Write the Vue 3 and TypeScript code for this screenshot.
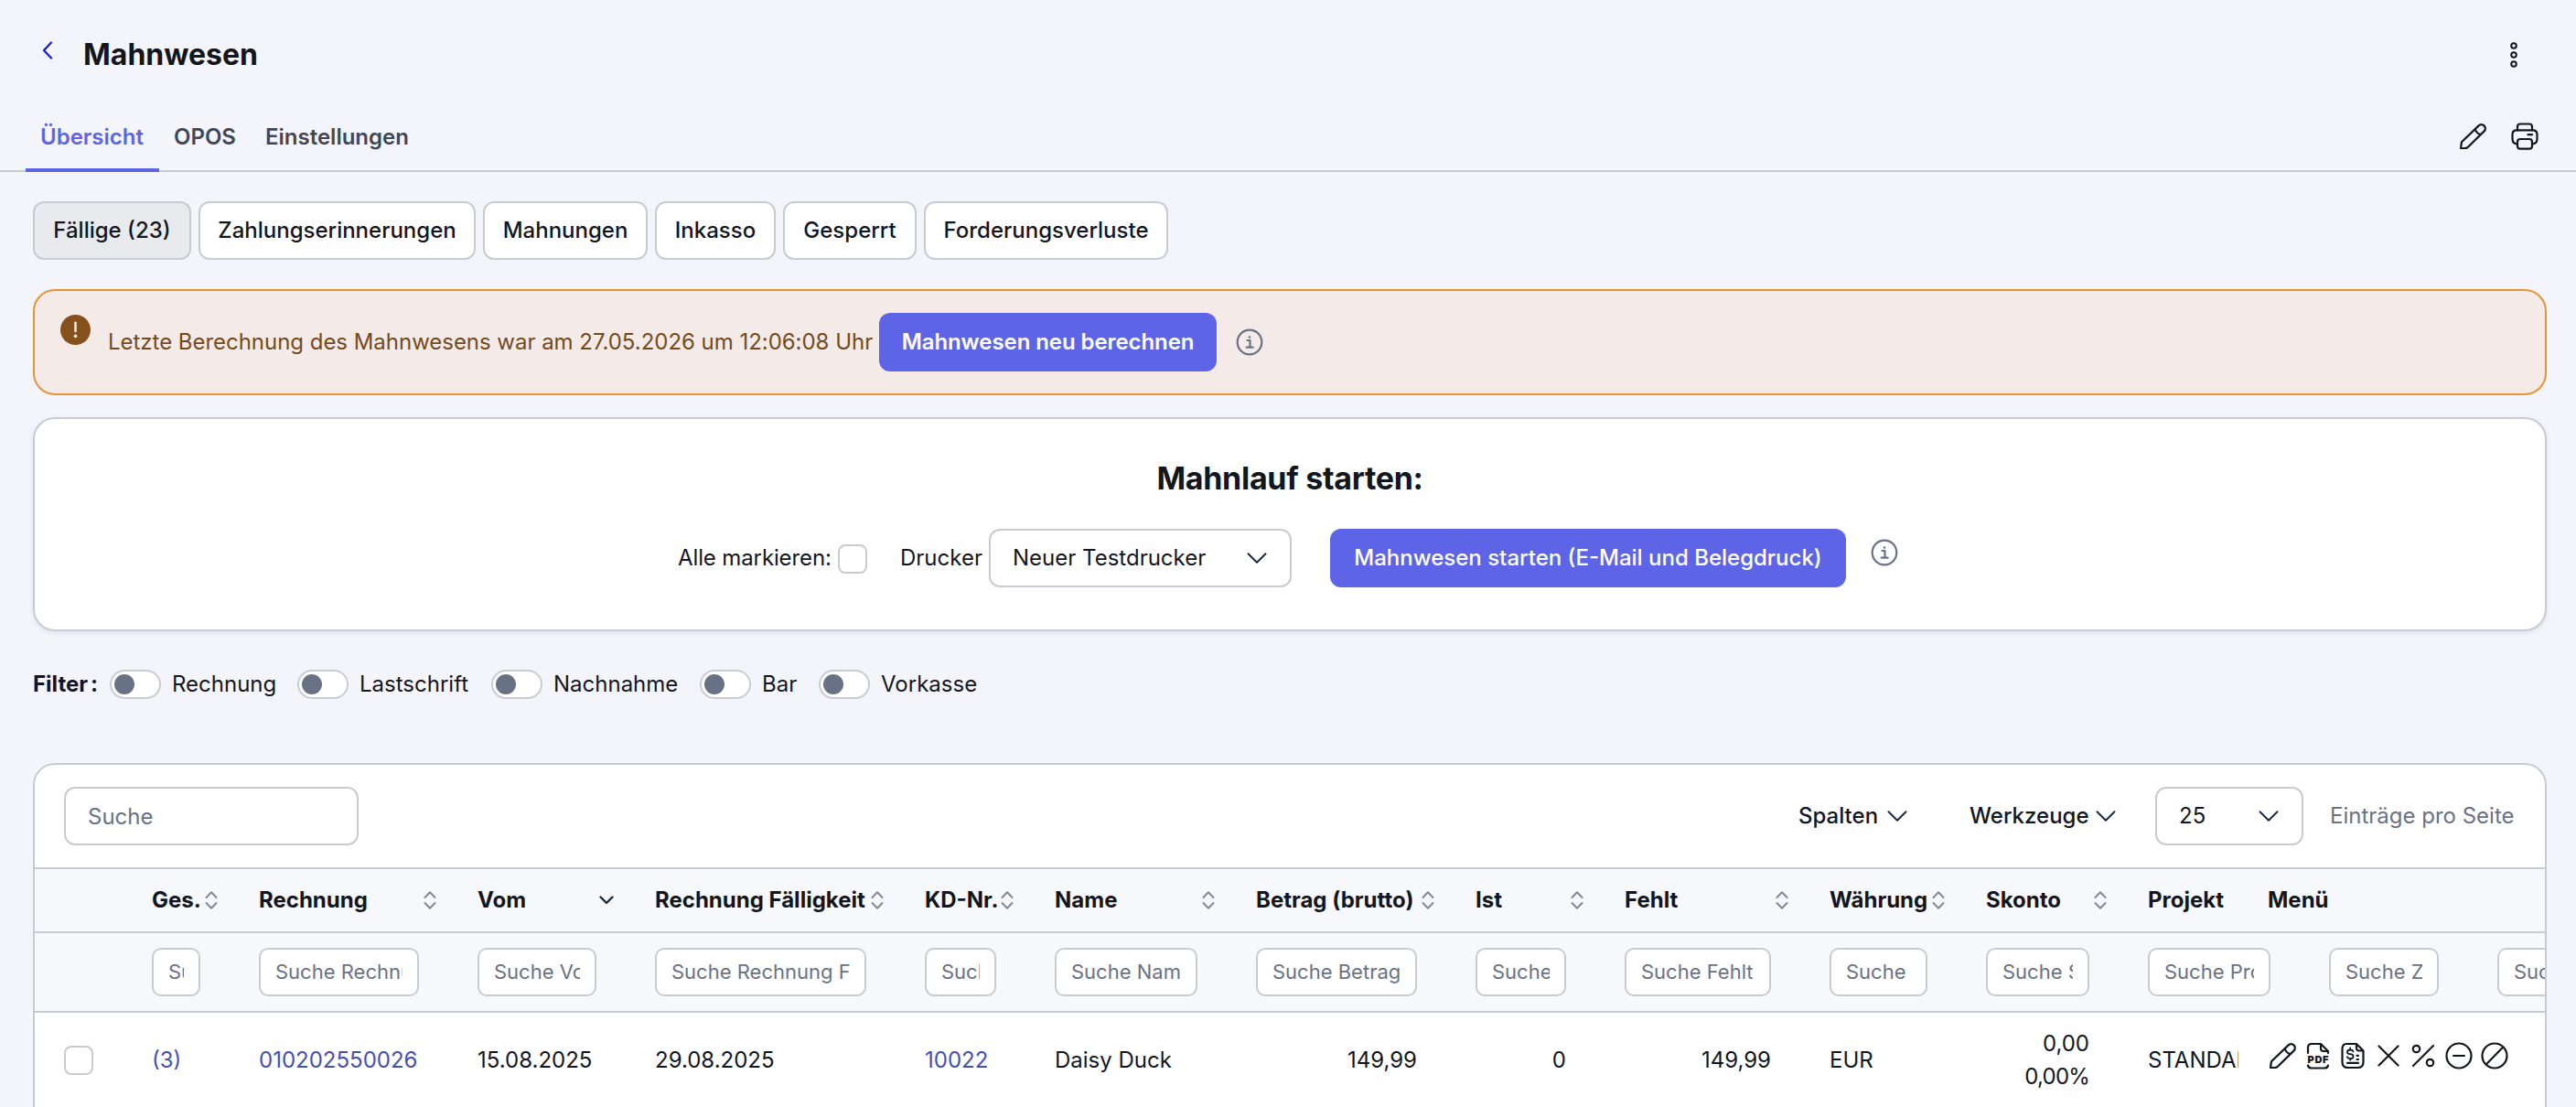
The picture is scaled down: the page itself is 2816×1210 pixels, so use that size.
<script setup lang="ts">
interface Column {
  label: string
  width: number
  placeholder: string
  sort: 'both' | 'desc' | 'none'
}

const tabs: string[] = ['Übersicht', 'OPOS', 'Einstellungen']

const pills: { label: string; width: number }[] = [
  { label: 'Fällige (23)', width: 173 },
  { label: 'Zahlungserinnerungen', width: 303 },
  { label: 'Mahnungen', width: 180 },
  { label: 'Inkasso', width: 132 },
  { label: 'Gesperrt', width: 146 },
  { label: 'Forderungsverluste', width: 267 },
]

const filters: { label: string; width: number }[] = [
  { label: 'Rechnung', width: 205 },
  { label: 'Lastschrift', width: 212 },
  { label: 'Nachnahme', width: 228 },
  { label: 'Bar', width: 130 },
  { label: 'Vorkasse', width: 180 },
]

const columns: Column[] = [
  { label: 'Ges.', width: 117, placeholder: 'Suche Ges.', sort: 'both' },
  { label: 'Rechnung', width: 239, placeholder: 'Suche Rechnung', sort: 'both' },
  { label: 'Vom', width: 194, placeholder: 'Suche Vom', sort: 'desc' },
  { label: 'Rechnung Fälligkeit', width: 295, placeholder: 'Suche Rechnung Fälligkeit', sort: 'both' },
  { label: 'KD-Nr.', width: 142, placeholder: 'Suche KD-Nr.', sort: 'both' },
  { label: 'Name', width: 220, placeholder: 'Suche Name', sort: 'both' },
  { label: 'Betrag (brutto)', width: 240, placeholder: 'Suche Betrag (brutto)', sort: 'both' },
  { label: 'Ist', width: 163, placeholder: 'Suche Ist', sort: 'both' },
  { label: 'Fehlt', width: 224, placeholder: 'Suche Fehlt', sort: 'both' },
  { label: 'Währung', width: 171, placeholder: 'Suche Währung', sort: 'both' },
  { label: 'Skonto', width: 177, placeholder: 'Suche Skonto', sort: 'both' },
]

const trailingFilters: { placeholder: string; width: number }[] = [
  { placeholder: 'Suche Projekt', width: 198 },
  { placeholder: 'Suche Zahlweise', width: 184 },
  { placeholder: 'Suche', width: 184 },
]
</script>

<template>
  <div class="page">
    <header class="title-row">
      <svg class="back" viewBox="0 0 12 20" width="12" height="20"><path d="M10 1.5 2 10l8 8.5" /></svg>
      <h1>Mahnwesen</h1>
      <svg class="kebab" viewBox="0 0 8 28" width="8" height="28">
        <circle cx="4" cy="4" r="2.8" /><circle cx="4" cy="14" r="2.8" /><circle cx="4" cy="24" r="2.8" />
      </svg>
    </header>

    <nav class="tabs">
      <a v-for="(tab, i) in tabs" :key="tab" class="tab" :class="{ active: i === 0 }">{{ tab }}</a>
      <div class="tab-tools">
        <svg class="icon" viewBox="0 0 28 28" width="28" height="28">
          <path d="M1 27 2 20.2 20.6 2.4a4.2 4.2 0 0 1 6 6L8.4 26.2Q7 27 5 27Z" /><path d="M16.8 6.2Q18 10.5 22.4 12" />
        </svg>
        <svg class="icon printer" viewBox="0 0 30 30" width="30" height="30">
          <path d="M7 8.4V4.5Q7 1.5 10 1.5h10q3 0 3 3v3.9" />
          <path d="M7 23.4Q1.5 23 1.5 18v-5Q1.5 8.4 6 8.4h18q4.5 0 4.5 4.6v5q0 5-5.5 5.4" />
          <rect x="7" y="18" width="16" height="10.7" rx="3" /><path d="M18.5 13.2h4.5" />
        </svg>
      </div>
    </nav>

    <main>
      <div class="pills">
        <button v-for="(p, i) in pills" :key="p.label" class="pill" :class="{ on: i === 0 }" :style="{ width: p.width + 'px' }">{{ p.label }}</button>
      </div>

      <section class="alert">
        <svg class="warn" viewBox="0 0 32 32" width="33" height="33">
          <circle cx="16" cy="16" r="16" fill="#85501c" />
          <path d="M16 8.5v9" stroke="#f4eae8" stroke-width="2.5" stroke-linecap="round" />
          <circle cx="16" cy="22.6" r="1.8" fill="#f4eae8" />
        </svg>
        <span class="alert-text">Letzte Berechnung des Mahnwesens war am 27.05.2026 um 12:06:08 Uhr</span>
        <button class="primary recalc">Mahnwesen neu berechnen</button>
        <svg class="info" viewBox="0 0 30 30" width="30" height="30">
          <circle cx="15" cy="15" r="13.3" /><path d="M12.5 13h3v7.5M11.7 20.7h7" /><circle class="dot" cx="15" cy="9.5" r="1.3" />
        </svg>
      </section>

      <section class="run">
        <h2>Mahnlauf starten:</h2>
        <div class="run-row">
          <span class="mark-label">Alle markieren:</span>
          <span class="check"></span>
          <span class="printer-label">Drucker</span>
          <div class="select printer-select">
            <span>Neuer Testdrucker</span>
            <svg class="chev" viewBox="0 0 22 12" width="22" height="12"><path d="m1.500 1.200 9.500 9.500 9.500-9.500" /></svg>
          </div>
          <button class="primary start">Mahnwesen starten (E-Mail und Belegdruck)</button>
          <svg class="info high" viewBox="0 0 30 30" width="30" height="30">
            <circle cx="15" cy="15" r="13.3" /><path d="M12.5 13h3v7.5M11.7 20.7h7" /><circle class="dot" cx="15" cy="9.5" r="1.3" />
          </svg>
        </div>
      </section>

      <div class="filters">
        <strong>Filter<span class="colon">:</span></strong>
        <label v-for="f in filters" :key="f.label" :style="{ width: f.width + 'px' }"><i class="toggle"></i>{{ f.label }}</label>
      </div>

      <section class="table-card">
        <div class="toolbar">
          <input class="search" placeholder="Suche" />
          <div class="tool columns">Spalten <svg class="chev" viewBox="0 0 22 12" width="22" height="12"><path d="m1.500 1.200 9.500 9.500 9.500-9.500" /></svg></div>
          <div class="tool utilities">Werkzeuge <svg class="chev" viewBox="0 0 22 12" width="22" height="12"><path d="m1.500 1.200 9.500 9.500 9.500-9.500" /></svg></div>
          <div class="select size-select">
            <span>25</span>
            <svg class="chev" viewBox="0 0 22 12" width="22" height="12"><path d="m1.500 1.200 9.500 9.500 9.500-9.500" /></svg>
          </div>
          <span class="per-page">Einträge pro Seite</span>
        </div>

        <div class="row head">
          <div class="lead"></div>
          <div v-for="c in columns" :key="c.label" class="cell th" :style="{ width: c.width + 'px' }">
            <span>{{ c.label }}</span>
            <svg v-if="c.sort === 'both'" class="sort" viewBox="0 0 14 20" width="14" height="20"><path d="m1.500 7 5.500-5.800L12.500 7M1.500 13l5.500 5.800 5.500-5.800" /></svg>
            <svg v-else class="sort desc" viewBox="0 0 16 10" width="16" height="10"><path d="m1.500 1.500 6.500 6.500 6.500-6.500" /></svg>
          </div>
          <div class="cell project">Projekt</div>
          <div class="menu-title">Menü</div>
        </div>

        <div class="row search-row">
          <div class="lead"></div>
          <div v-for="c in columns" :key="c.label" class="cell" :style="{ width: c.width + 'px' }"><input :placeholder="c.placeholder" /></div>
          <div v-for="t in trailingFilters" :key="t.placeholder" class="cell" :style="{ width: t.width + 'px' }"><input :placeholder="t.placeholder" /></div>
        </div>

        <div class="row data">
          <div class="lead"><span class="check"></span></div>
          <div class="cell link" :style="{ width: columns[0].width + 'px' }">(3)</div>
          <div class="cell link" :style="{ width: columns[1].width + 'px' }">010202550026</div>
          <div class="cell" :style="{ width: columns[2].width + 'px' }">15.08.2025</div>
          <div class="cell" :style="{ width: columns[3].width + 'px' }">29.08.2025</div>
          <div class="cell link" :style="{ width: columns[4].width + 'px' }">10022</div>
          <div class="cell" :style="{ width: columns[5].width + 'px' }">Daisy Duck</div>
          <div class="cell num" :style="{ width: columns[6].width + 'px' }">149,99</div>
          <div class="cell num" :style="{ width: columns[7].width + 'px' }">0</div>
          <div class="cell num" :style="{ width: columns[8].width + 'px' }">149,99</div>
          <div class="cell" :style="{ width: columns[9].width + 'px' }">EUR</div>
          <div class="cell num" :style="{ width: columns[10].width + 'px' }">0,00<br /><span class="percent">0,00%</span></div>
          <div class="cell project"><div class="clip">STANDARD</div></div>
          <div class="actions">
            <svg class="icon" viewBox="0 0 28 28"><path d="M1 27 2 20.2 20.6 2.4a4.2 4.2 0 0 1 6 6L8.4 26.2Q7 27 5 27Z" /><path d="M16.8 6.2Q18 10.5 22.4 12" /></svg>
            <svg class="icon" viewBox="0 0 28 28">
              <path d="M3 11V5q0-4 4-4h10l8 8v2M17 1v5q0 3 3 3h5M3 24.500q.5 3 4 3h14q3.500 0 4-3" />
              <text x="14.300" y="22" text-anchor="middle">PDF</text>
            </svg>
            <svg class="icon" viewBox="0 0 28 28">
              <path d="M7 1h11l7.500 7.500V21q0 6-6 6h-11q-6 0-6-6V7Q2.500 1 7 1ZM18 1v4.500q0 3 3 3h4.500M8 21.800h12M18.500 13.800h1.500M18.500 18h1.500" />
              <path class="fine" d="M14.500 9.300Q13.500 7.500 11.200 7.500 8 7.500 8 10 8 12 11.200 12.200q3.300.2 3.300 2.500 0 2.500-3.300 2.500-2.500 0-3.300-1.900M11.200 5.500v2M11.200 17.200v1.600" />
            </svg>
            <svg class="icon" viewBox="0 0 28 28"><path d="M3.500 3.500l21 21M24.500 3.500l-21 21" /></svg>
            <svg class="icon" viewBox="0 0 28 28"><path d="M25 3 3 25" /><circle cx="6.500" cy="6.500" r="3.700" /><circle cx="21.500" cy="21.500" r="3.700" /></svg>
            <svg class="icon" viewBox="0 0 28 28"><circle cx="14" cy="14" r="13.500" /><path d="M8 14h12" /></svg>
            <svg class="icon" viewBox="0 0 28 28"><circle cx="14" cy="14" r="13.500" /><path d="M23 4.700 5 23.300" /></svg>
          </div>
        </div>
      </section>
    </main>
  </div>
</template>

<style>
body {
  background: #f4f5fb;
}
</style>

<style scoped>
* {
  box-sizing: border-box;
}
.page {
  width: 2816px;
  height: 1210px;
  overflow: hidden;
  background: #f4f5fb;
  color: #14161d;
  font-family: Inter, 'Liberation Sans', sans-serif;
  font-size: 24px;
  line-height: 36px;
}
svg {
  flex: none;
  fill: none;
  stroke-linecap: round;
  stroke-linejoin: round;
  overflow: visible;
}
button,
input {
  font: inherit;
  color: inherit;
  margin: 0;
}
h1,
h2 {
  margin: 0;
}
.title-row {
  display: flex;
  align-items: center;
  height: 120px;
  padding: 0 64px 0 46px;
}
.back {
  stroke: #1414e8;
  stroke-width: 2.2;
  margin-bottom: 10px;
}
h1 {
  margin-left: 33px;
  font-size: 32px;
  font-weight: 700;
  flex: 1;
}
.kebab {
  stroke: #14161d;
  stroke-width: 2;
}
.tabs {
  display: flex;
  height: 68px;
  padding: 0 41px 0 28px;
  border-bottom: 2px solid #c9cbd3;
}
.tab {
  height: 68px;
  padding: 12px 16px;
  font-weight: 600;
  color: #414753;
}
.tab.active {
  width: 146px;
  color: #5d65e6;
  border-bottom: 4px solid #5d65e6;
}
.tab-tools {
  display: flex;
  align-items: center;
  gap: 28px;
  margin-left: auto;
  height: 58px;
}
.icon {
  stroke: #14161d;
  stroke-width: 2.2;
}
main {
  padding: 32px 32px 0 36px;
}
.pills {
  display: flex;
  gap: 8px;
}
.pill {
  height: 64px;
  padding: 0;
  border: 2px solid #c9cbd3;
  border-radius: 12px;
  background: #fff;
  font-weight: 500;
  white-space: nowrap;
}
.pill.on {
  background: #e9eaee;
}
.alert {
  display: flex;
  align-items: center;
  height: 116px;
  margin-top: 32px;
  padding-left: 28px;
  border: 2px solid #e79338;
  border-radius: 24px;
  background: #f4eae8;
  color: #744a1b;
}
.warn {
  margin-bottom: 28px;
}
.alert-text {
  width: 843px;
  margin-left: 19px;
  letter-spacing: -0.03px;
  white-space: nowrap;
}
.primary {
  height: 64px;
  padding: 0;
  border: 0;
  border-radius: 12px;
  background: #5d65e6;
  color: #fff;
  font-weight: 600;
  letter-spacing: -0.08px;
  white-space: nowrap;
}
.recalc {
  width: 369px;
}
.info {
  margin-left: 21px;
  stroke: #697284;
  stroke-width: 2.2;
}
.info .dot {
  fill: #697284;
  stroke: none;
}
.run {
  height: 234px;
  margin-top: 24px;
  padding-top: 41px;
  border: 2px solid #c9cbd3;
  border-radius: 24px;
  background: #fff;
  box-shadow: 0 2px 6px rgba(20, 22, 50, 0.08);
}
h2 {
  text-align: center;
  font-size: 34px;
  font-weight: 700;
  line-height: 48px;
  letter-spacing: -0.3px;
}
.run-row {
  display: flex;
  align-items: center;
  height: 64px;
  margin-top: 31px;
  padding-left: 703px;
  white-space: nowrap;
}
.mark-label {
  width: 175px;
  letter-spacing: -0.12px;
}
.check {
  flex: none;
  display: block;
  width: 32px;
  height: 32px;
  border: 2px solid #c9cbd3;
  border-radius: 8px;
  background: #fff;
}
.run-row .check {
  margin-top: 2px;
}
.printer-label {
  width: 97px;
  margin-left: 36px;
}
.select {
  display: flex;
  align-items: center;
  justify-content: space-between;
  height: 64px;
  padding: 0 25px 0 24px;
  border: 2px solid #c9cbd3;
  border-radius: 12px;
  background: #fff;
}
.printer-select {
  width: 331px;
}
.chev {
  stroke: #1d2942;
  stroke-width: 2;
}
.start {
  width: 564px;
  margin-left: 42px;
  font-weight: 500;
  letter-spacing: 0;
}
.info.high {
  margin-left: 27px;
  margin-bottom: 12px;
}
.filters {
  display: flex;
  align-items: center;
  height: 36px;
  margin-top: 40px;
}
.filters strong {
  width: 84px;
}
.colon {
  margin-left: 3px;
}
.filters label {
  display: flex;
  align-items: center;
  gap: 12px;
}
.toggle {
  display: block;
  width: 56px;
  height: 32px;
  padding: 3px;
  border: 2px solid #c9cbd3;
  border-radius: 16px;
  background: #fff;
}
.toggle::before {
  content: '';
  display: block;
  width: 22px;
  height: 22px;
  border-radius: 50%;
  background: #697284;
}
.table-card {
  width: 2748px;
  height: 460px;
  margin-top: 68px;
  border: 2px solid #c9cbd3;
  border-radius: 24px;
  background: #fff;
  overflow: hidden;
}
.toolbar {
  display: flex;
  align-items: center;
  height: 114px;
  padding: 0 30px 0 32px;
  border-bottom: 2px solid #c9cbd3;
  white-space: nowrap;
}
input {
  border: 2px solid #c9cbd3;
  border-radius: 10px;
  background: #fff;
  min-width: 0;
  outline: none;
}
input::placeholder {
  color: #697284;
  opacity: 1;
}
.search {
  width: 322px;
  height: 64px;
  padding: 0 24px;
  border-radius: 12px;
}
.tool {
  display: flex;
  align-items: center;
  justify-content: space-between;
  font-weight: 500;
}
.columns {
  width: 119px;
  margin-left: auto;
}
.utilities {
  width: 160px;
  margin: 0 43px 0 68px;
}
.size-select {
  width: 162px;
}
.per-page {
  width: 205px;
  margin-left: 29px;
  color: #697284;
}
.row {
  display: flex;
  align-items: center;
  width: 2900px;
}
.lead {
  flex: none;
  width: 96px;
  padding-left: 32px;
}
.cell {
  flex: none;
  padding: 0 32px;
  white-space: nowrap;
}
.head {
  height: 70px;
  background: #f7f8fb;
  border-bottom: 2px solid #c9cbd3;
  font-weight: 700;
}
.th {
  display: flex;
  align-items: center;
  justify-content: space-between;
  padding-right: 13px;
}
.sort {
  stroke: #838a99;
  stroke-width: 2;
}
.sort.desc {
  stroke: #1d2942;
  stroke-width: 2.4;
}
.project {
  width: 163px;
}
.search-row {
  height: 87px;
  background: #f7f8fb;
  border-bottom: 2px solid #c9cbd3;
}
.search-row input {
  display: block;
  width: 100%;
  height: 53px;
  padding: 0 16px 2px;
  font-size: 22px;
}
.data {
  height: 103px;
}
.link {
  color: #464eb8;
}
.num {
  text-align: right;
}
.percent {
  letter-spacing: -0.8px;
}
.clip {
  width: 99px;
  overflow: hidden;
}
.actions {
  display: flex;
  gap: 10.6px;
  margin: 0 0 10px 2px;
}
.actions svg {
  width: 28px;
  height: 28px;
}
.actions .fine {
  stroke-width: 1.8;
}
.actions text {
  font-size: 11px;
  font-weight: 900;
  letter-spacing: 0.6px;
  fill: #14161d;
  stroke: none;
}
</style>
